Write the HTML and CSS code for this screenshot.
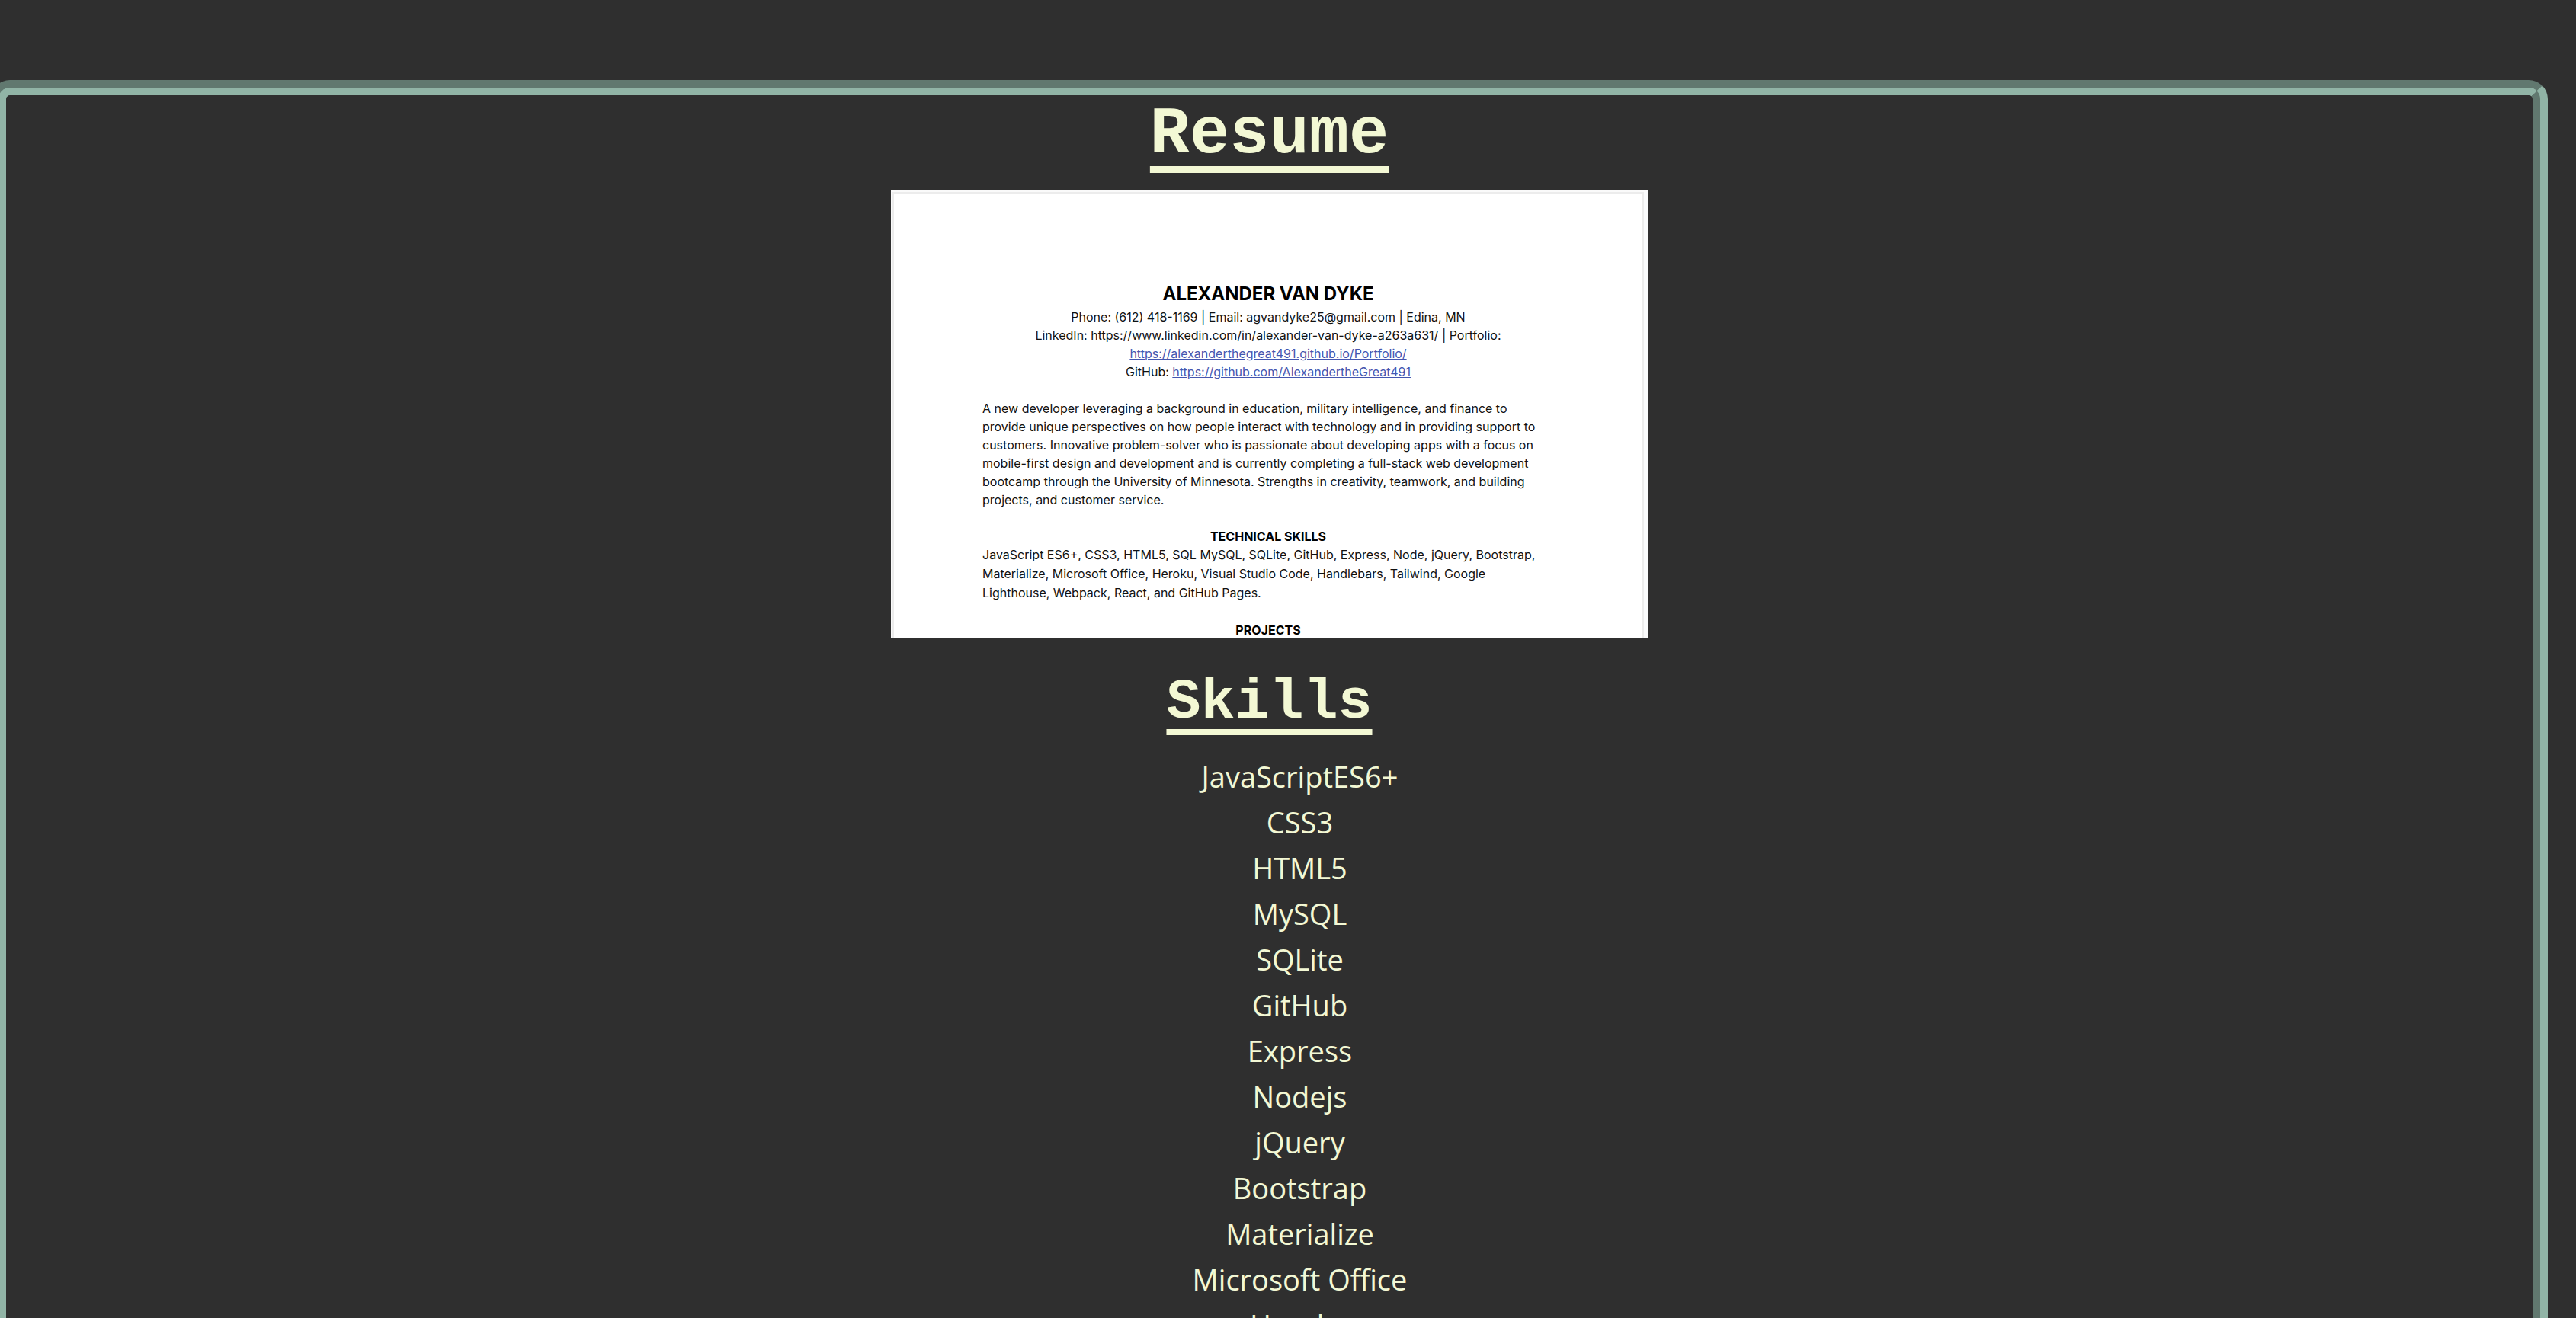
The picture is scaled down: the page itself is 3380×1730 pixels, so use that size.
FILE: index.html
```html
<!DOCTYPE html>
<html lang="en">
<head>
<meta charset="utf-8">
<title>Resume</title>
<link rel="stylesheet" href="styles.css">
</head>
<body>
<main class="panel">
  <div class="panel-inner">
    <h1 class="title">Resume</h1>
    <article class="sheet">
      <h2 class="name">ALEXANDER VAN DYKE</h2>
      <address class="contact">
        Phone: (612) 418-1169 | Email: agvandyke25@gmail.com | Edina, MN<br>
        LinkedIn: https://www.linkedin.com/in/alexander-van-dyke-a263a631/<span class="gap"> </span>| Portfolio:<br>
        <a href="https://alexanderthegreat491.github.io/Portfolio/">https://alexanderthegreat491.github.io/Portfolio/</a><br>
        GitHub: <a href="https://github.com/AlexandertheGreat491">https://github.com/AlexandertheGreat491</a>
      </address>
      <p class="summary">A new developer leveraging a background in education, military intelligence, and finance to<br>
        provide unique perspectives on how people interact with technology and in providing support to<br>
        customers. Innovative problem-solver who is passionate about developing apps with a focus on<br>
        mobile-first design and development and is currently completing a full-stack web development<br>
        bootcamp through the University of Minnesota. Strengths in creativity, teamwork, and building<br>
        projects, and customer service.</p>
      <h3 class="section">TECHNICAL SKILLS</h3>
      <p class="tech">JavaScript ES6+, CSS3, HTML5, SQL MySQL, SQLite, GitHub, Express, Node, jQuery, Bootstrap,<br>
        Materialize, Microsoft Office, Heroku, Visual Studio Code, Handlebars, Tailwind, Google<br>
        Lighthouse, Webpack, React, and GitHub Pages.</p>
      <h3 class="section">PROJECTS</h3>
    </article>
    <h2 class="subtitle">Skills</h2>
    <ul class="skills">
      <li>JavaScriptES6+</li>
      <li>CSS3</li>
      <li>HTML5</li>
      <li>MySQL</li>
      <li>SQLite</li>
      <li>GitHub</li>
      <li>Express</li>
      <li>Nodejs</li>
      <li>jQuery</li>
      <li>Bootstrap</li>
      <li>Materialize</li>
      <li>Microsoft Office</li>
      <li>Heroku</li>
    </ul>
  </div>
</main>
</body>
</html>
```
FILE: styles.css
```css
* {
  box-sizing: border-box;
}

body {
  margin: 0;
  height: 100vh;
  overflow: hidden;
  background: #2f2f2f;
  color: #f3f8d4;
  font: 38px/60px "Open Sans", "Noto Sans", sans-serif;
}

/* Two nested borders form the grooved frame. */
.panel {
  margin: 105px 37px 0 -12px;
  border: 10px solid;
  border-color: #61786f #91b4a6 #91b4a6 #61786f;
  border-radius: 25px;
  background: #91b4a6;
  text-align: center;
}

.panel-inner {
  border: 10px solid;
  border-color: #91b4a6 #61786f #61786f #91b4a6;
  border-radius: 15px;
  background: #2f2f2f;
}

.title,
.subtitle {
  margin: 0 0 20px;
  font-family: "Liberation Mono", "Courier New", monospace;
  font-weight: 700;
  text-decoration: underline;
  text-decoration-skip-ink: none;
}

.title {
  font-size: 87px;
  line-height: 105px;
  text-decoration-thickness: 9px;
  text-underline-offset: 18px;
}

.subtitle {
  font-size: 75px;
  line-height: 92px;
  text-decoration-thickness: 8px;
  text-underline-offset: 15px;
}

.sheet {
  width: 993px;
  max-width: 100%;
  height: 587px;
  margin: 0 auto 40px;
  padding: 118px 0 0;
  overflow: hidden;
  background: #fff;
  border: 2px solid #fafafa;
  border-right: 5px solid #fafbfc;
  border-bottom: 0;
  box-shadow: inset 2px 2px #ececec, inset -2px 0 #ececec;
  color: #111;
  font: 16px/24px Inter, sans-serif;
  white-space: nowrap;
}

.name {
  margin: 0 0 2px;
  font-size: 24px;
  line-height: 32px;
  color: #000;
}

.contact {
  font-style: normal;
  margin-bottom: 24px;
}

.contact a,
.gap {
  color: #4456b0;
  text-decoration: underline;
}

.summary,
.tech {
  margin: 0 0 24px;
  padding-left: 118px;
  text-align: left;
}

.tech {
  line-height: 25px;
}

.section {
  margin: 0;
  font-size: 16px;
  line-height: 24px;
  color: #000;
}

.skills {
  margin: 0;
  padding: 0 0 0 80px;
  list-style: none;
}
```
